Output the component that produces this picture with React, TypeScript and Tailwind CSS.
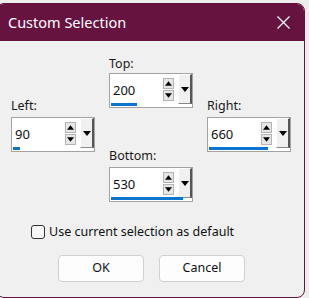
import React from 'react';

const font = { fontFamily: '"Noto Sans", "Open Sans", sans-serif' };

interface SpinProps {
  label: string;
  value: string;
  bar: number;
  labelGap?: string;
}

const Tri: React.FC<{ up?: boolean; size?: number }> = ({ up, size = 7 }) => (
  <svg width={size} height={Math.ceil(size / 2) + 1} viewBox="0 0 8 5">
    {up ? <polygon points="0,5 8,5 4,0" fill="#000" /> : <polygon points="0,0 8,0 4,5" fill="#000" />}
  </svg>
);

const Spin: React.FC<SpinProps> = ({ label, value, bar, labelGap = 'mb-[3px]' }) => (
  <div className="flex flex-col w-[84px]">
    <div className={`text-[12.5px] leading-[16px] text-[#1a1a1a] ${labelGap}`}>{label}</div>
    <div className="relative h-[35px] border border-[#a3a3a3] bg-white flex">
      <div className="flex-1 flex items-center pl-[3px] text-[13px] text-[#111]">{value}</div>
      <div className="flex flex-col gap-[1px] pt-[4px] w-[11px] mr-[4px]">
        <div className="h-[11px] border border-[#b4b4b4] bg-[#e6e6e6] flex items-center justify-center">
          <Tri up />
        </div>
        <div className="h-[11px] border border-[#b4b4b4] bg-[#e6e6e6] flex items-center justify-center">
          <Tri />
        </div>
      </div>
      <div className="w-[14px] mb-[3px] bg-[#f0f0f0] border-l border-t border-l-white border-t-white border-r-[2px] border-r-[#555] border-b border-b-[#888] flex items-center justify-center">
        <Tri size={8} />
      </div>
      <div className="absolute left-[1px] bottom-[1px] h-[3px] bg-[#0a74d0]" style={{ width: bar }} />
    </div>
  </div>
);

export default function App() {
  return (
    <div className="w-[309px] h-[298px] bg-[#ededed] overflow-hidden pt-[3px]" style={font}>
      <div className="ml-[-4px] w-[309px] h-[295px] border border-[#66133f] rounded-[8px] overflow-hidden flex flex-col bg-[#f0f0f0]">
        <div className="h-[37px] bg-[#66133f] flex items-center justify-between pl-[11px] pr-[14px]">
          <span className="text-[14.5px] text-white">Custom Selection</span>
          <svg width="13" height="13" viewBox="0 0 13 13">
            <path d="M0.5 0.5 L12.5 12.5 M12.5 0.5 L0.5 12.5" stroke="#fff" strokeWidth="1.2" />
          </svg>
        </div>
        <div className="flex-1 flex flex-col">
          <div className="flex gap-[14px] pl-[14px] pt-[15px]">
            <div className="pt-[42px]">
              <Spin label="Left:" value="90" bar={7} />
            </div>
            <div className="flex flex-col gap-[40px]">
              <Spin label="Top:" value="200" bar={26} labelGap="mb-[1px]" />
              <Spin label="Bottom:" value="530" bar={72} />
            </div>
            <div className="pt-[42px]">
              <Spin label="Right:" value="660" bar={59} />
            </div>
          </div>
          <label className="flex items-center gap-[4px] pl-[34px] mt-[22px] text-[12.5px] leading-[16px] text-[#111]">
            <span className="w-[14px] h-[14px] border border-[#333] rounded-[3px] bg-[#f7f7f7]" />
            Use current selection as default
          </label>
          <div className="flex justify-center gap-[15px] mt-[15px] pl-[2px]">
            <button className="w-[86px] h-[27px] rounded-[4px] border border-[#d0d0d0] bg-[#fdfdfd] text-[12.5px] text-[#111]">OK</button>
            <button className="w-[86px] h-[27px] rounded-[4px] border border-[#d0d0d0] bg-[#fdfdfd] text-[12.5px] text-[#111]">Cancel</button>
          </div>
        </div>
      </div>
    </div>
  );
}
